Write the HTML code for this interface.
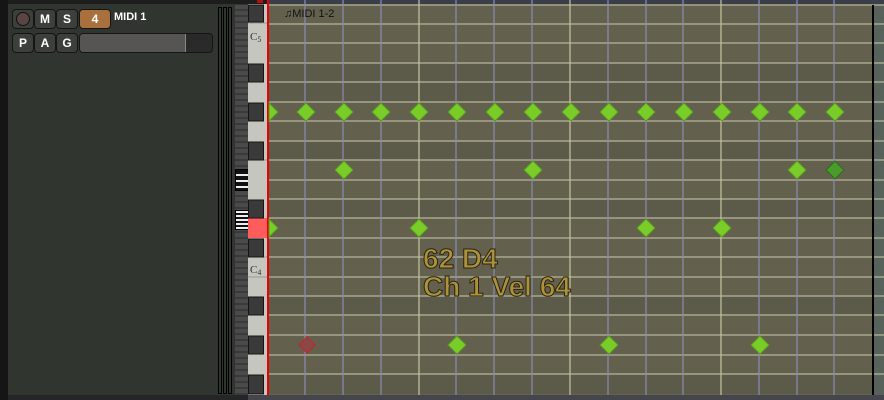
<!DOCTYPE html>
<html><head><style>
body{margin:0;width:884px;height:400px;overflow:hidden;background:#31352f;font-family:"Liberation Sans",sans-serif;position:relative}
.a{position:absolute}
.btn{position:absolute;top:9px;width:20px;height:18px;background:#3c3f3c;border:1px solid #151515;border-radius:4px;color:#fff;font-weight:bold;font-size:12px;text-align:center;line-height:18px;box-sizing:content-box}
.txt{font-size:28px;font-weight:bold;color:#ad923c;-webkit-text-stroke:1px #2a2412;line-height:28px}
</style></head><body>
<div class="a" style="left:0;top:0;width:8px;height:400px;background:#151515"></div>
<div class="a" style="left:8px;top:0;width:260px;height:4px;background:#1c1d1c"></div>
<div class="a" style="left:8px;top:395px;width:260px;height:5px;background:#252528"></div>
<div class="a" style="left:257px;top:0;width:6px;height:3px;background:#b01010"></div>
<div class="btn" style="left:12px"><span style="display:inline-block;width:12px;height:12px;border-radius:50%;background:#5a4444;border:1px solid #111;margin-top:2px"></span></div>
<div class="btn" style="left:34px">M</div>
<div class="btn" style="left:56px">S</div>
<div class="a" style="left:79px;top:9px;width:30px;height:18px;background:#a8703c;border:1px solid #151515;border-radius:4px;color:#fff;font-weight:bold;font-size:12px;text-align:center;line-height:18px">4</div>
<div class="a" style="left:114px;top:11px;color:#fff;font-weight:bold;font-size:11px">MIDI 1</div>
<div class="btn" style="left:12px;top:33px">P</div>
<div class="btn" style="left:34px;top:33px">A</div>
<div class="btn" style="left:56px;top:33px">G</div>
<div class="a" style="left:79px;top:33px;width:132px;height:18px;background:#2a2a2a;border:1px solid #151515;border-radius:4px;overflow:hidden"><div style="width:105px;height:18px;background:#575454;border-right:1px solid #888"></div></div>
<div class="a" style="left:218px;top:7px;width:2px;height:385px;border:1px solid #000"></div>
<div class="a" style="left:223px;top:7px;width:2px;height:385px;border:1px solid #000"></div>
<div class="a" style="left:228px;top:7px;width:2px;height:385px;border:1px solid #000"></div>
<div class="a" style="left:235px;top:5px;width:13px;height:390px;background:repeating-linear-gradient(#4a4a4a 0 4px,#3a3a3a 4px 6px)"></div>
<div class="a" style="left:235px;top:169px;width:12px;height:20px;border:1px solid #000;background:repeating-linear-gradient(#111 0 4px,#eee 4px 6px)"></div>
<div class="a" style="left:235px;top:210px;width:12px;height:18px;border:1px solid #000;background:repeating-linear-gradient(#eee 0 2px,#111 2px 4px)"></div>
<svg class="a" style="left:248px;top:0" width="636" height="400">
<rect x="0" y="4" width="20" height="391" fill="#c6c6c0"/>
<g stroke="#9a9a96">
<line x1="0" y1="23" x2="20" y2="23"/><line x1="0" y1="257" x2="20" y2="257"/><line x1="0" y1="160" x2="20" y2="160"/><line x1="0" y1="277" x2="20" y2="277"/>
</g>
<rect x="0" y="218" width="20" height="20" fill="#ff5c5c"/>
<g fill="#3a3a3a" stroke="#151515">
<rect x="0.5" y="5" width="15" height="17"/><rect x="0.5" y="64" width="15" height="18"/><rect x="0.5" y="103" width="15" height="18"/><rect x="0.5" y="142" width="15" height="18"/><rect x="0.5" y="200" width="15" height="18"/><rect x="0.5" y="239" width="15" height="18"/><rect x="0.5" y="297" width="15" height="18"/><rect x="0.5" y="336" width="15" height="18"/><rect x="0.5" y="375" width="15" height="19"/>
</g>
<text x="2" y="40" font-family="Liberation Serif" font-size="11" fill="#333">C<tspan font-size="8" dy="2">5</tspan></text>
<text x="2" y="273" font-family="Liberation Serif" font-size="11" fill="#333">C<tspan font-size="8" dy="2">4</tspan></text>
<rect x="19" y="0" width="2" height="400" fill="#e00"/>
<rect x="21" y="0" width="615" height="5" fill="#3a3e48"/>
<rect x="21" y="5" width="604" height="390" fill="#63614d"/>
<g fill="#5c5a48"><rect x="21" y="63" width="604" height="39"/><rect x="21" y="141" width="604" height="19"/><rect x="21" y="199" width="604" height="19"/><rect x="21" y="296" width="604" height="19"/><rect x="21" y="374" width="604" height="20"/></g>
<rect x="625" y="5" width="11" height="390" fill="#56625a"/>
<g stroke="#a8a890" stroke-width="1.5">
<line x1="21" y1="5" x2="636" y2="5"/><line x1="21" y1="24" x2="636" y2="24"/><line x1="21" y1="43" x2="636" y2="43"/><line x1="21" y1="63" x2="636" y2="63"/><line x1="21" y1="82" x2="636" y2="82"/><line x1="21" y1="102" x2="636" y2="102"/><line x1="21" y1="121" x2="636" y2="121"/><line x1="21" y1="141" x2="636" y2="141"/><line x1="21" y1="160" x2="636" y2="160"/><line x1="21" y1="180" x2="636" y2="180"/><line x1="21" y1="199" x2="636" y2="199"/><line x1="21" y1="218" x2="636" y2="218"/><line x1="21" y1="238" x2="636" y2="238"/><line x1="21" y1="257" x2="636" y2="257"/><line x1="21" y1="277" x2="636" y2="277"/><line x1="21" y1="296" x2="636" y2="296"/><line x1="21" y1="315" x2="636" y2="315"/><line x1="21" y1="335" x2="636" y2="335"/><line x1="21" y1="355" x2="636" y2="355"/><line x1="21" y1="374" x2="636" y2="374"/>
</g>
<g stroke="#8a8ab4" stroke-width="1.2">
<line x1="57" y1="0" x2="57" y2="395"/><line x1="95" y1="0" x2="95" y2="395"/><line x1="133" y1="0" x2="133" y2="395"/><line x1="208" y1="0" x2="208" y2="395"/><line x1="246" y1="0" x2="246" y2="395"/><line x1="284" y1="0" x2="284" y2="395"/><line x1="360" y1="0" x2="360" y2="395"/><line x1="398" y1="0" x2="398" y2="395"/><line x1="435" y1="0" x2="435" y2="395"/><line x1="511" y1="0" x2="511" y2="395"/><line x1="549" y1="0" x2="549" y2="395"/><line x1="586" y1="0" x2="586" y2="395"/>
</g>
<g stroke="#c8c4a0" stroke-width="1.2"><line x1="171" y1="0" x2="171" y2="395"/><line x1="322" y1="0" x2="322" y2="395"/><line x1="473" y1="0" x2="473" y2="395"/></g>
<rect x="624" y="5" width="2" height="390" fill="#000"/>
<rect x="0" y="395" width="636" height="5" fill="#45454d"/>
<g fill="#7acc28" stroke="#5a9a20">
<path d="M21 103l9 9-9 9z"/>
<path d="M58 103l9 9-9 9-9-9z"/><path d="M96 103l9 9-9 9-9-9z"/><path d="M133 103l9 9-9 9-9-9z"/><path d="M171 103l9 9-9 9-9-9z"/><path d="M209 103l9 9-9 9-9-9z"/><path d="M247 103l9 9-9 9-9-9z"/><path d="M285 103l9 9-9 9-9-9z"/><path d="M323 103l9 9-9 9-9-9z"/><path d="M361 103l9 9-9 9-9-9z"/><path d="M398 103l9 9-9 9-9-9z"/><path d="M436 103l9 9-9 9-9-9z"/><path d="M474 103l9 9-9 9-9-9z"/><path d="M512 103l9 9-9 9-9-9z"/><path d="M549 103l9 9-9 9-9-9z"/><path d="M587 103l9 9-9 9-9-9z"/>
<path d="M96 161l9 9-9 9-9-9z"/><path d="M285 161l9 9-9 9-9-9z"/><path d="M549 161l9 9-9 9-9-9z"/>
<path d="M21 219l9 9-9 9z"/><path d="M171 219l9 9-9 9-9-9z"/><path d="M398 219l9 9-9 9-9-9z"/><path d="M474 219l9 9-9 9-9-9z"/>
<path d="M209 336l9 9-9 9-9-9z"/><path d="M361 336l9 9-9 9-9-9z"/><path d="M512 336l9 9-9 9-9-9z"/>
</g>
<path d="M587 161l9 9-9 9-9-9z" fill="#4a9a2c" stroke="#2e6a1e"/>
<path d="M59 337l8 8-8 8-8-8z" fill="#8a4848" stroke="#c02828" stroke-width="1.2"/>
<text x="36" y="17" font-size="11" fill="#111">♫MIDI 1-2</text>
</svg>
<div class="a txt" style="left:423px;top:245px">62 D4<br>Ch 1 Vel 64</div>
</body></html>
